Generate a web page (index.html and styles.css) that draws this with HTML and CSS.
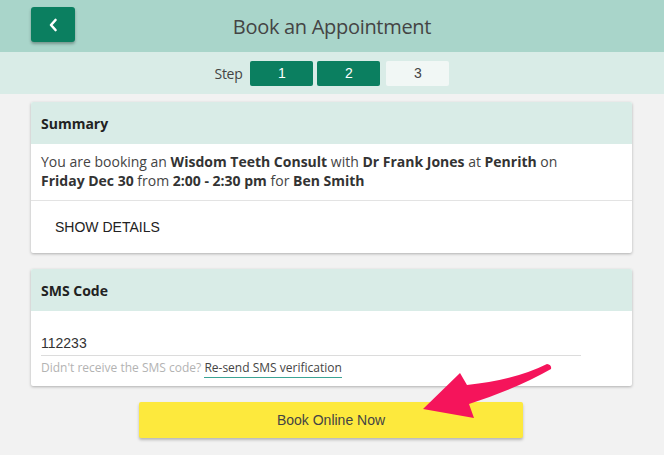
FILE: index.html
```html
<!DOCTYPE html>
<html>
<head>
<meta charset="utf-8">
<link rel="stylesheet" href="styles.css">
</head>
<body>
<header class="topbar">
  <div class="topbar-left">
    <button class="back-btn" aria-label="Back">
      <svg width="10" height="14" viewBox="0 0 10 14"><path d="M7.5 2 L3 7 L7.5 12" fill="none" stroke="#fff" stroke-width="2.6" stroke-linecap="round" stroke-linejoin="round"/></svg>
    </button>
  </div>
  <h1 class="title">Book an Appointment</h1>
  <div></div>
</header>
<nav class="steps">
  <span class="step-label">Step</span>
  <span class="step done">1</span>
  <span class="step done">2</span>
  <span class="step todo">3</span>
</nav>
<main class="content">
  <section class="card">
    <div class="card-head">Summary</div>
    <div class="card-body summary-text">
      You are booking an <b>Wisdom Teeth Consult</b> with <b>Dr Frank Jones</b> at <b>Penrith</b> on <b>Friday Dec 30</b> from <b>2:00 - 2:30 pm</b> for <b>Ben Smith</b>
    </div>
    <div class="card-actions">SHOW DETAILS</div>
  </section>
  <section class="card">
    <div class="card-head">SMS Code</div>
    <div class="card-body sms-body">
      <div class="sms-input">112233</div>
      <div class="sms-help">Didn't receive the SMS code? <a class="resend">Re-send SMS verification</a></div>
    </div>
  </section>
  <div class="book-wrap">
    <button class="book-btn">Book Online Now</button>
  </div>
</main>
<svg class="arrow" width="664" height="455" viewBox="0 0 664 455">
  <path d="M547 364 Q515 380 467 385 L460 373 L423 409 L474 418 L469 404 Q518 388 551 369 Q552 365 547 364 Z" fill="#f5145b"/>
</svg>
</body>
</html>
```
FILE: styles.css
```css
* { box-sizing: border-box; }
body {
  margin: 0;
  background: #f2f2f2;
  font-family: "Open Sans", "Noto Sans", sans-serif;
  color: #444;
  width: 664px;
  height: 455px;
  overflow: hidden;
}
.topbar {
  height: 52px;
  background: #a9d5ca;
  display: grid;
  grid-template-columns: 1fr auto 1fr;
  align-items: center;
}
.topbar-left { padding-left: 31px; display: flex; }
.back-btn {
  width: 44px;
  height: 35px;
  margin-top: -3px;
  border: none;
  border-radius: 3px;
  background: #0b7f60;
  box-shadow: 0 2px 3px rgba(0,0,0,0.3);
  display: flex;
  align-items: center;
  justify-content: center;
  padding: 0;
}
.back-btn svg { display: block; }
.title {
  margin: 0;
  font-weight: 400;
  font-size: 20px;
  color: #444;
  letter-spacing: -0.3px;
}
.steps {
  height: 42px;
  background: #d9ece7;
  display: flex;
  align-items: center;
  justify-content: center;
  gap: 4px;
}
.step-label {
  font-size: 14px;
  color: #444;
  margin-right: 4px;
  letter-spacing: -0.3px;
}
.step {
  width: 63px;
  height: 25px;
  border-radius: 2px;
  display: flex;
  align-items: center;
  justify-content: center;
  font-family: "Liberation Sans", Arial, sans-serif;
  font-size: 14px;
}
.step.done { background: #0b7f60; color: #fff; }
.step.todo { background: #f1f7f5; color: #444; margin-left: 2px; }
.content {
  padding: 8px 32px 0 31px;
  display: flex;
  flex-direction: column;
  gap: 16px;
}
.card {
  background: #fff;
  border-radius: 2px;
  box-shadow: 0 1px 3px rgba(0,0,0,0.28);
  overflow: hidden;
}
.card-head {
  height: 42px;
  background: #d9ece7;
  display: flex;
  align-items: center;
  padding-left: 10px;
  font-size: 14px;
  font-weight: 700;
  color: #222;
}
.summary-text {
  padding: 8px 10px 10px;
  font-size: 14px;
  line-height: 19px;
  color: #444;
  border-bottom: 1px solid #e3e3e3;
}
.summary-text b { color: #333; white-space: nowrap; }
.card-actions {
  height: 52px;
  display: flex;
  align-items: center;
  padding-left: 24px;
  font-family: "Liberation Sans", Arial, sans-serif;
  font-size: 14px;
  color: #222;
}
.sms-body { padding: 22px 51px 10px 10px; }
.sms-input {
  font-family: "Liberation Sans", Arial, sans-serif;
  font-size: 14px;
  line-height: 20px;
  color: #333;
  padding-bottom: 2px;
  border-bottom: 1px solid #dcdcdc;
}
.sms-help {
  margin-top: 4px;
  font-size: 12px;
  line-height: 16px;
  color: #b3b3b3;
}
.resend {
  color: #444;
  border-bottom: 1px solid #3ba394;
  padding-bottom: 1px;
}
.book-wrap { display: flex; justify-content: center; padding-right: 1px; }
.book-btn {
  width: 384px;
  height: 36px;
  border: none;
  border-radius: 2px;
  background: #fde93d;
  box-shadow: 0 2px 3px rgba(0,0,0,0.25);
  font-family: "Liberation Sans", Arial, sans-serif;
  font-size: 14px;
  color: #444;
}
.arrow {
  position: absolute;
  left: 0;
  top: 0;
  pointer-events: none;
}
```
